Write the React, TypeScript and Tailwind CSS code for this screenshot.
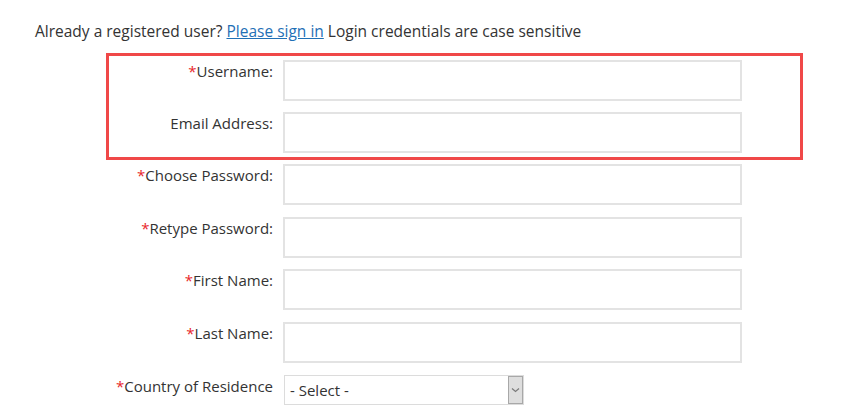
import React from "react";

const rows = [
  { label: "Choose Password:", req: true, mt: "mt-[4px]" },
  { label: "Retype Password:", req: true, mt: "mt-[12px]" },
  { label: "First Name:", req: true, mt: "mt-[11px]" },
  { label: "Last Name:", req: true, mt: "mt-[12px]" },
];

function Label({ text, req }: { text: string; req?: boolean }) {
  return (
    <div className="w-[164px] shrink-0 whitespace-nowrap pt-px text-right text-[15px] leading-5">
      {req && <span className="text-[#e8262b]">*</span>}
      {text}
    </div>
  );
}

function Field() {
  return <div className="ml-[10px] h-[41px] w-[459px] border-2 border-[#e3e3e3] bg-white" />;
}

export default function App() {
  return (
    <div
      className="h-[420px] w-[850px] bg-white text-[15.5px] text-[#333333]"
      style={{ fontFamily: '"Open Sans", "Liberation Sans", sans-serif' }}
    >
      <div className="pl-[35px] pt-[21px] leading-5">
        Already a registered user?{" "}
        <a href="#" className="text-[#1f70b6] underline">
          Please sign in
        </a>{" "}
        Login credentials are case sensitive
      </div>

      <div className="ml-[106px] mt-[12px] w-[697px]">
        <div className="border-[3px] border-[#f04848] pt-[4px] pb-[4px]">
          <div className="flex">
            <Label text="Username:" req />
            <Field />
          </div>
          <div className="mt-[11px] flex">
            <Label text="Email Address:" />
            <Field />
          </div>
        </div>

        <div className="px-[3px]">
          {rows.map((r) => (
            <div key={r.label} className={`${r.mt} flex`}>
              <Label text={r.label} req={r.req} />
              <Field />
            </div>
          ))}
          <div className="mt-[12px] flex">
            <Label text="Country of Residence" req />
            <div className="ml-[11px] flex h-[30px] w-[240px] border border-[#dcdcdc] bg-white text-[15px]">
              <div className="flex flex-1 items-center pl-[5px] leading-5">- Select -</div>
              <div className="flex w-[15px] items-center justify-center border border-[#a8a8a8] bg-[#dedede]">
                <svg width="9" height="6" viewBox="0 0 9 6" fill="none">
                  <path d="M1 1.5 L4.5 4.5 L8 1.5" stroke="#7a7a7a" strokeWidth="1.2" />
                </svg>
              </div>
            </div>
          </div>
        </div>
      </div>
    </div>
  );
}
